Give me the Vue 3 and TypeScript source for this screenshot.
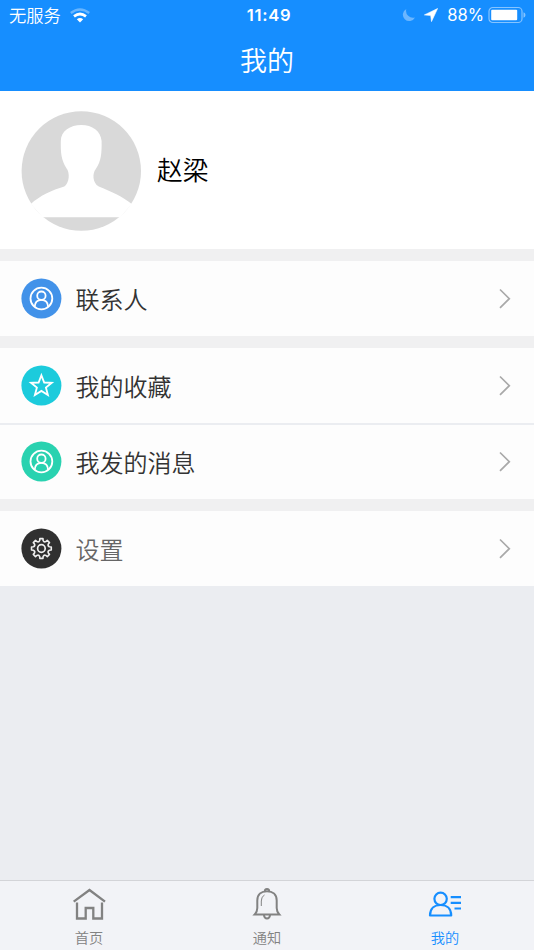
<script setup lang="ts">
type Icon = 'person' | 'star' | 'gear'
interface Item { label: string; icon: Icon; color: string; muted?: boolean }

const groups: Item[][] = [
  [{ label: '联系人', icon: 'person', color: '#4292e9' }],
  [
    { label: '我的收藏', icon: 'star', color: '#1ccbdc' },
    { label: '我发的消息', icon: 'person', color: '#29d2b0' },
  ],
  [{ label: '设置', icon: 'gear', color: '#303030', muted: true }],
]

function polar(angle: number, radius: number): string {
  const a = (angle * Math.PI) / 180
  return `${(20 + radius * Math.sin(a)).toFixed(2)} ${(20 - radius * Math.cos(a)).toFixed(2)}`
}

// Eight narrow teeth joined by scalloped valleys.
function gearPath(): string {
  let d = `M${polar(-9, 10)}`
  for (let i = 0; i < 8; i++) {
    const a = i * 45
    d += `L${polar(a + 9, 10)}L${polar(a + 12, 8.2)}Q${polar(a + 22.5, 6.6)} ${polar(a + 33, 8.2)}L${polar(a + 36, 10)}`
  }
  return `${d}Z`
}
const gear = gearPath()
</script>

<template>
  <div class="screen">
    <header class="header">
      <div class="status">
        <div class="side">
          <span class="carrier">无服务</span>
          <svg class="wifi" width="20" height="15" viewBox="0 0 20 15">
            <path d="M.8 5Q10-2.200 19.200 5" fill="none" stroke="#fff" stroke-width="2.400" opacity=".35" />
            <path d="M4 8.400Q10 3.600 16 8.400" fill="none" stroke="#fff" stroke-width="2.700" />
            <path d="M6.800 11.300Q10 8.600 13.200 11.300L10 14.500Z" fill="#fff" />
          </svg>
        </div>
        <span class="clock">11:49</span>
        <div class="side right">
          <svg class="moon" width="14" height="14" viewBox="0 0 14 14">
            <path d="M4.300 1A6.400 6.400 0 1 0 13 9.500A7 7 0 0 1 4.300 1Z" fill="#6bb6ff" />
          </svg>
          <svg class="arrow" width="14" height="14" viewBox="0 0 14 14">
            <path d="M13.600.5L.4 6.900L6.700 7.400L7.500 13.600Z" fill="#fff" stroke="#fff" stroke-width=".6" stroke-linejoin="round" />
          </svg>
          <span class="percent">88%</span>
          <svg class="battery" width="38" height="18" viewBox="0 0 38 18">
            <rect x="1" y="1.500" width="33" height="15" rx="3.800" fill="none" stroke="#86c4ff" stroke-width="1.200" />
            <rect x="3.200" y="3.700" width="26" height="10.600" rx="1" fill="#fff" />
            <path d="M35.500 6.200Q37.500 7 37.500 9T35.500 11.800Z" fill="#86c4ff" />
          </svg>
        </div>
      </div>
      <h1 class="title">我的</h1>
    </header>

    <section class="profile">
      <svg width="120" height="120" viewBox="0 0 120 120">
        <circle cx="60.300" cy="60" r="59.700" fill="#d9d9d9" />
        <path d="M60.300 14C49.300 14 39.800 20 39.800 30C39.600 42 40.300 49 45.300 57C49.300 62 48.300 72 43.300 75.500C31.300 79 18.300 85 9.800 93L21.300 106.300H99.300L110.800 93C102.300 86 89.300 80 77.800 75.500C71.300 72 71.300 62 74.800 58C80.300 50 80.800 42 80.600 30C79.800 20 71.300 14 60.300 14Z" fill="#fff" />
      </svg>
      <span class="name">赵梁</span>
    </section>

    <main class="menu">
      <section v-for="(group, index) in groups" :key="index" class="group">
        <div v-for="item in group" :key="item.label" class="row">
          <svg class="badge" width="41" height="41" viewBox="-0.4 -0.5 41 41">
            <circle cx="20" cy="20" r="20" :fill="item.color" />
            <g fill="none" stroke="#fff" stroke-width="1.800">
              <template v-if="item.icon === 'person'">
                <circle cx="20" cy="20" r="10.900" />
                <circle cx="20" cy="17.200" r="4.200" />
                <path d="M13.300 28.300C13.500 24 16 21.400 20 21.400S26.500 24 26.700 28.300" />
              </template>
              <path v-else-if="item.icon === 'star'" d="M20 9.800L22.800 17L30.400 17.300L24.500 22.100L26.500 29.600L20 25.400L13.500 29.600L15.500 22.100L9.600 17.300L17.200 17Z" />
              <template v-else>
                <path :d="gear" stroke="#eee" stroke-width="1.600" stroke-linejoin="round" />
                <circle cx="20" cy="20" r="3.800" stroke="#eee" stroke-width="1.700" />
              </template>
            </g>
          </svg>
          <span class="label" :class="{ muted: item.muted }">{{ item.label }}</span>
          <svg class="chevron" width="12" height="21" viewBox="0 0 12 21">
            <path d="M1 1.500L10.300 10.700L1 19.900" fill="none" stroke="#a9a9a9" stroke-width="1.700" />
          </svg>
        </div>
      </section>
    </main>

    <nav class="tabs">
      <a class="tab">
        <svg width="34" height="34" viewBox="0 0 34 34" fill="none" stroke="currentColor" stroke-width="2.300">
          <path d="M1.700 14.700L17.500 3L33 14.700" />
          <path d="M5 15.500V31.500H13.700V21H21.300V31.500H30V15.500" />
        </svg>
        <span>首页</span>
      </a>
      <a class="tab">
        <svg width="34" height="34" viewBox="0 0 34 34" fill="none" stroke="currentColor" stroke-width="2">
          <path d="M15 4.200Q14.500 2 17 2T19 4.200" />
          <path d="M4.700 27.500H29.300Q26.700 24.800 26.700 21V13.500C26.700 7.500 22.500 4.200 17 4.200S7.300 7.500 7.300 13.500V21Q7.300 24.800 4.700 27.500Z" />
          <path d="M14 28Q14.300 31.500 17 31.500T20 28" />
          <path d="M11.300 19V14Q11.300 9.500 14.500 8" stroke-width="1" />
        </svg>
        <span>通知</span>
      </a>
      <a class="tab active">
        <svg width="34" height="34" viewBox="0 0 34 34" fill="none" stroke="currentColor" stroke-width="2.200">
          <circle cx="12.600" cy="11.800" r="6.200" />
          <path d="M2 28.500C2 21.500 6.500 18 12.600 18S23.200 21.500 23.200 28.500Z" stroke-linejoin="round" />
          <path d="M22.700 10.200H33M22.700 15.800H33M26.500 21.500H33" />
        </svg>
        <span>我的</span>
      </a>
    </nav>
  </div>
</template>

<style>
body { background: #ebedf1; }
</style>

<style scoped>
.screen {
  display: flex;
  flex-direction: column;
  height: 950px;
  overflow: hidden;
  background: #ebedf1;
  font-family: Inter, "Noto Sans CJK SC", sans-serif;
}
.header {
  flex: none;
  height: 91.400px;
  color: #fff;
  background: #168eff;
}
.status {
  display: grid;
  grid-template-columns: 1fr auto 1fr;
  align-items: center;
  height: 30px;
  padding: 0 8px 0 9px;
}
.side { display: flex; align-items: center; }
.right { justify-content: flex-end; }
.carrier { padding-top: 1px; font-size: 17.300px; line-height: 29px; font-weight: 350; }
.wifi { margin-left: 9px; }
.clock { font-size: 16.600px; font-weight: 600; letter-spacing: .7px; padding-left: 3px; }
.moon { margin-right: -1px; }
.arrow { margin: 0 9px 0 9px; }
.percent { font-size: 16.600px; margin-right: 4px; }
.title {
  margin: 0;
  padding-top: 3px;
  font-size: 27px;
  line-height: 58px;
  font-weight: 350;
  text-align: center;
}
.profile {
  flex: none;
  display: flex;
  align-items: center;
  gap: 16px;
  height: 158px;
  box-sizing: border-box;
  padding: 1px 0 0 21px;
  background: #fff;
}
.name { padding-top: 1px; font-size: 25.800px; line-height: 40px; font-weight: 350; color: #000; }
.menu { flex: 1; }
.group {
  border-top: 12px solid #f0f0f1;
}
.row {
  display: flex;
  align-items: center;
  height: 74.800px;
  padding: 0 23px 0 21px;
  box-sizing: border-box;
  background: #fdfdfd;
}
.row + .row { margin-top: 1.600px; }
.label { flex: 1; margin-left: 13.500px; padding-top: 4px; font-size: 24px; line-height: 40px; font-weight: 350; color: #333; }
.label.muted { color: #666; }
.tabs {
  flex: none;
  display: grid;
  grid-template-columns: repeat(3, 1fr);
  height: 70px;
  box-sizing: border-box;
  border-top: 1px solid #d3d4d8;
  background: #f2f3f7;
}
.tab {
  display: flex;
  flex-direction: column;
  align-items: center;
  padding-top: 6px;
  color: #828282;
  font-size: 14.200px;
  line-height: 20px;
}
.tab span { margin-top: 7px; font-weight: 350; }
.active { color: #168eff; }
</style>
